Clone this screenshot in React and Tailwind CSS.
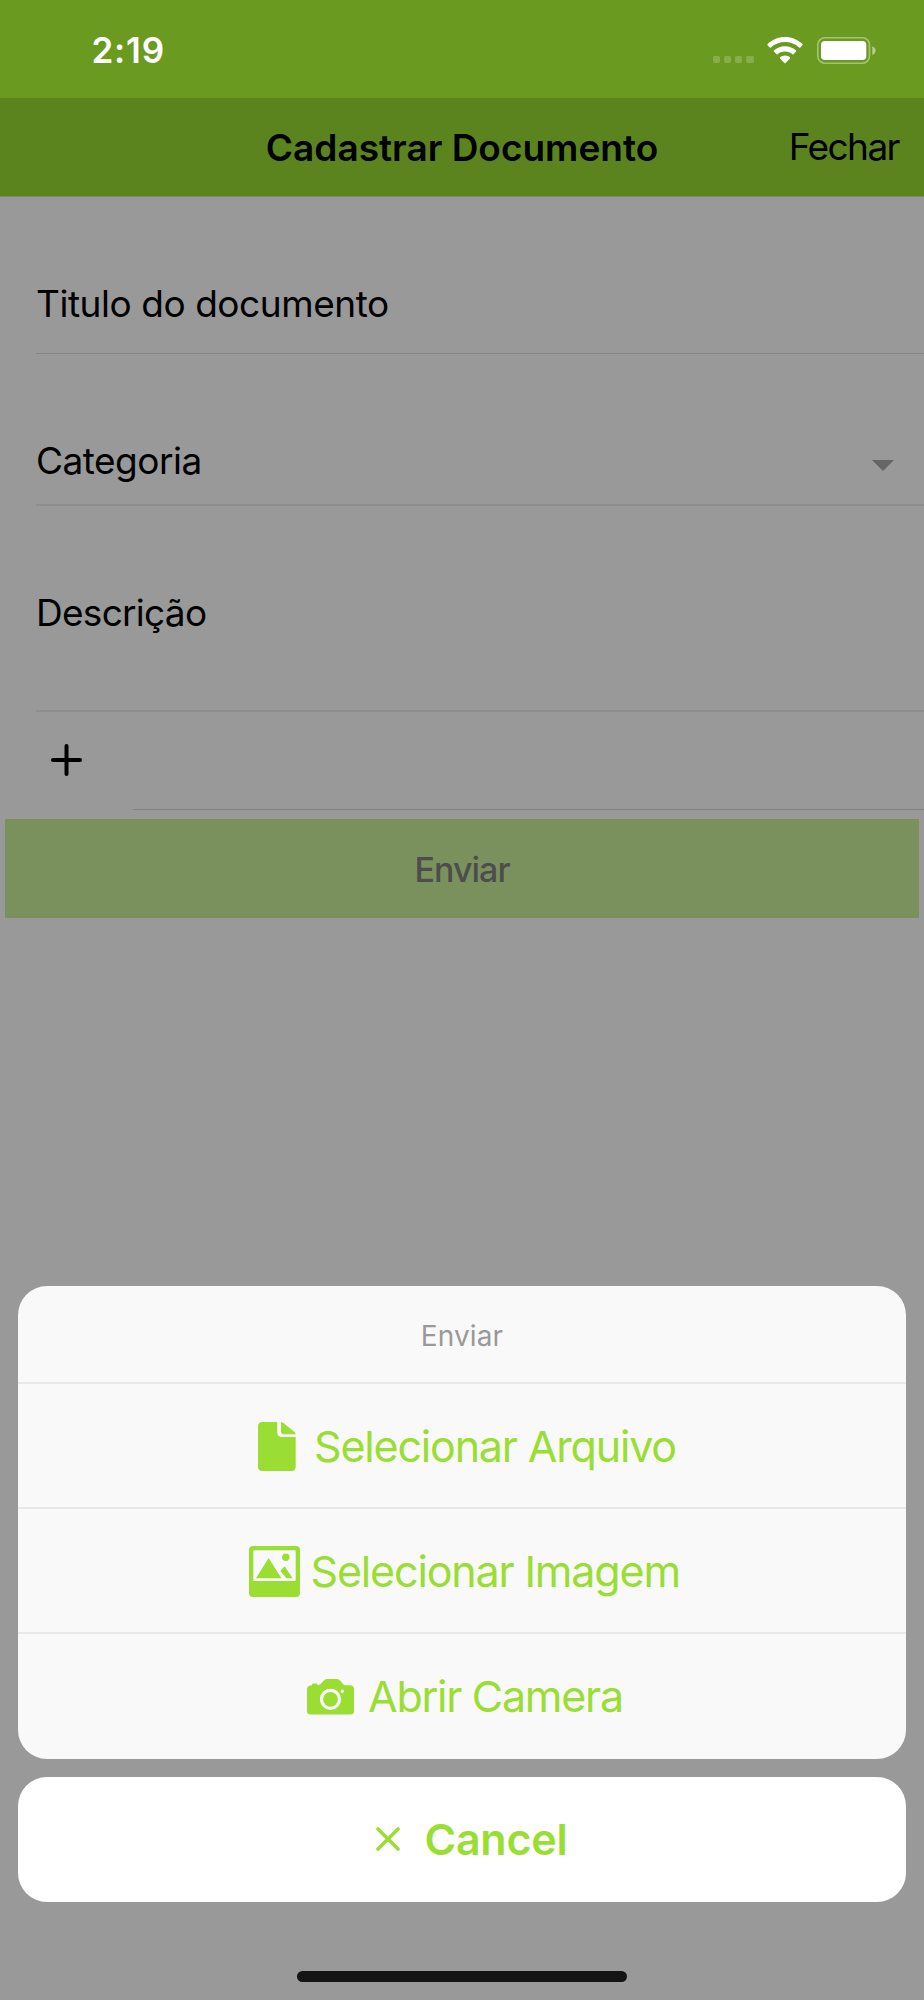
function StatusBar() {
  return (
    <div className="flex h-[98px] items-start bg-[#6b9a20] pt-[37px] pl-[91.5px] text-white">
      <span className="w-[621.5px] text-[35px] leading-[27px] font-semibold tracking-[0.8px]">2:19</span>
      <div className="flex h-[27px] items-end">
        <div className="flex gap-[3.8px]">
          {[0, 1, 2, 3].map((dot) => (
            <span key={dot} className="mb-[0.7px] size-[7.3px] rounded-[2px] bg-white/20" />
          ))}
        </div>
        <svg className="ml-[13px] h-[27px] w-9" viewBox="0 0 36 27" fill="currentColor">
          <path d="M18 0C24.9 0 31.2 2.7 35.4 7.1Q35.9 7.7 35.4 8.2L33.3 10.4Q32.7 10.9 32.1 10.4C28.3 6.9 23.4 5 18 5S7.7 6.9 3.9 10.4Q3.3 10.9 2.7 10.4L.6 8.2Q.1 7.7 .6 7.1C4.8 2.7 11.1 0 18 0Z" />
          <path d="M18 9.2C22.4 9.2 26.2 10.8 29.1 13.5Q29.6 14 29.1 14.6L26.5 17.2Q26 17.7 25.4 17.2C23.4 15.5 20.9 14.5 18 14.5S12.6 15.5 10.6 17.2Q10 17.7 9.5 17.2L6.9 14.6Q6.4 14 6.9 13.5C9.8 10.8 13.6 9.2 18 9.2Z" />
          <path d="M18 18.5C19.9 18.5 21.6 19.2 22.9 20.3Q23.4 20.8 22.9 21.4L18.6 25.9Q18 26.5 17.4 25.9L13.1 21.4Q12.6 20.8 13.1 20.3C14.4 19.2 16.1 18.5 18 18.5Z" />
        </svg>
        <svg className="ml-[14px] h-[27px] w-[60px]" viewBox="0 0 60 27">
          <rect x="0.8" y="0.8" width="51.7" height="25.4" rx="7" fill="none" stroke="#fff" strokeOpacity="0.4" strokeWidth="1.6" />
          <rect x="4" y="4" width="45.3" height="19" rx="4" fill="#fff" />
          <path d="M55.3 9.2C57.3 10 58.6 11.6 58.6 13.6S57.3 17.2 55.3 18Z" fill="#fff" fillOpacity="0.5" />
        </svg>
      </div>
    </div>
  );
}

function Header() {
  return (
    <div className="grid h-[99px] grid-cols-[1fr_auto_1fr] items-center border-b border-[#7b8a62] bg-[#5c841e] text-[37px] leading-[44px] text-black">
      <span />
      <h1 className="pt-px font-semibold">Cadastrar Documento</h1>
      <button className="justify-self-end pr-[25px] tracking-[-1.55px]">Fechar</button>
    </div>
  );
}

const FileIcon = () => (
  <svg className="mt-0.5 h-[49px] w-[38px]" viewBox="0 0 38 49" fill="currentColor">
    <path d="M4.5 0H19.2V10Q19.2 15 24.2 15H37.7V44.5Q37.7 49 33.2 49H4.5Q0 49 0 44.5V4.5Q0 0 4.5 0Z" />
    <path d="M23 0Q24.3 0 25.5 1L36.500 10Q37.7 11.1 37.7 12.2H25.5Q23 12.2 23 9.7Z" />
  </svg>
);

const ImageIcon = () => (
  <svg className="mt-0.5 h-[51px] w-[51px]" viewBox="0 0 51 51" fill="currentColor">
    <path fillRule="evenodd" d="M4 0H47Q51 0 51 4V47Q51 51 47 51H4Q0 51 0 47V4Q0 0 4 0ZM5.3 4.2Q4.3 4.2 4.3 5.2V34.1Q4.3 35.1 5.3 35.1H45.7Q46.7 35.1 46.7 34.1V5.2Q46.7 4.2 45.7 4.2Z" />
    <path d="M19.6 12 32.5 32.2H7Z" />
    <path d="M35.5 20.3 43.7 32.2H37.4L31.4 24.9Z" />
    <circle cx="36.8" cy="11.3" r="3.7" />
  </svg>
);

const CameraIcon = () => (
  <svg className="mt-px h-9 w-[47px]" viewBox="0 0 47 36" fill="currentColor">
    <path
      fillRule="evenodd"
      d="M4.8 6.3V5.7Q5.2 4.5 6.7 4.5H8.8Q10.3 4.5 10.5 5.7L10.9 6.2C14 5.7 15.5 2.5 17.5 1Q18.7 0 20 0H29.5Q31.5 0 32.8 1.2C34.7 3 36 5.3 37.3 6.2H43Q47 6.2 47 10.2V32Q47 35.5 43.5 35.5H3.5Q0 35.5 0 32V10.2Q0 6.6 4.8 6.3ZM23.5 9.7A10.6 10.6 0 1 0 23.5 30.9 10.6 10.6 0 1 0 23.5 9.7ZM35.3 10.6A1.7 1.7 0 1 0 35.3 14 1.7 1.7 0 1 0 35.3 10.6Z"
    />
    <circle cx="23.5" cy="20.3" r="7.4" />
  </svg>
);

const CloseIcon = () => (
  <svg className="h-6 w-6" viewBox="0 0 24 24" fill="none" stroke="currentColor" strokeWidth="3.6" strokeLinecap="round">
    <path d="M2 2 22 22M22 2 2 22" />
  </svg>
);

function ActionSheet() {
  return (
    <div className="absolute top-[1285.5px] left-[18px] w-[888px] text-[43px] leading-[52px] whitespace-nowrap text-[#9ade33]">
      <div className="h-[473px] overflow-hidden rounded-[29px] bg-[#f9f9f9]">
        <div className="flex h-[98.5px] items-center justify-center border-b-2 border-[#e8e8e8] pt-[5px] text-[28px] tracking-[0.1px] text-[#999]">Enviar</div>
        <button className="flex h-[125px] w-full items-center border-b-2 border-[#e8e8e8] pl-[240px]">
          <FileIcon />
          <span className="ml-[18px] tracking-[-1.18px]">Selecionar Arquivo</span>
        </button>
        <button className="flex h-[125px] w-full items-center border-b-2 border-[#e8e8e8] pl-[231px]">
          <ImageIcon />
          <span className="ml-[10.5px] tracking-[-1.16px]">Selecionar Imagem</span>
        </button>
        <button className="flex h-[124.5px] w-full items-center pl-[289px]">
          <CameraIcon />
          <span className="ml-[14px] tracking-[-1.28px]">Abrir Camera</span>
        </button>
      </div>
      <button className="mt-[18px] flex h-[125px] w-full items-center rounded-[29px] bg-white pl-[358px] font-semibold">
        <CloseIcon />
        <span className="ml-[24.5px] tracking-[-0.25px]">Cancel</span>
      </button>
    </div>
  );
}

function App() {
  return (
    <div className="relative flex h-[2000px] w-[924px] flex-col overflow-hidden bg-[#999] font-['Inter',sans-serif]">
      <StatusBar />
      <Header />

      <form className="text-[37px] leading-[44px] text-black">
        <div className="ml-9 h-[157px] border-b border-[#868686] pt-[85px]">
          <label className="tracking-[-0.45px]">Titulo do documento</label>
        </div>
        <div className="ml-9 flex h-[152px] justify-between border-b-2 border-[#8d8d8d] pt-[85px] pr-[30px]">
          <label className="tracking-[-0.5px]">Categoria</label>
          <svg className="mt-[21px] h-[11px] w-[22px]" viewBox="0 0 22 11" fill="#666">
            <path d="M0 0H22L11 11Z" />
          </svg>
        </div>
        <div className="ml-9 h-[206px] border-b-2 border-[#8d8d8d] pt-[85px]">
          <label className="tracking-[-0.72px]">Descrição</label>
        </div>
        <div className="flex h-[98px]">
          <div className="flex w-[132.5px] items-center pb-0.5 pl-[50.5px]">
            <svg className="h-8 w-8" viewBox="0 0 32 32" fill="none" stroke="#000" strokeWidth="4" strokeLinecap="round">
              <path d="M15.500 2V30M2 16H29" />
            </svg>
          </div>
          <div className="flex-1 border-b border-[#818181]" />
        </div>
        <button type="button" className="mx-[4.6px] mt-[9px] flex h-[99px] w-[914.8px] items-center justify-center bg-[#7b915d] pt-0.5 text-[34px] font-medium tracking-[-0.97px] text-[#4d4d4d]">
          Enviar
        </button>
      </form>

      <ActionSheet />
      <div className="mt-auto mb-[18px] h-[11px] w-[330px] self-center rounded-full bg-[#141414]" />
    </div>
  );
}

export default App;
